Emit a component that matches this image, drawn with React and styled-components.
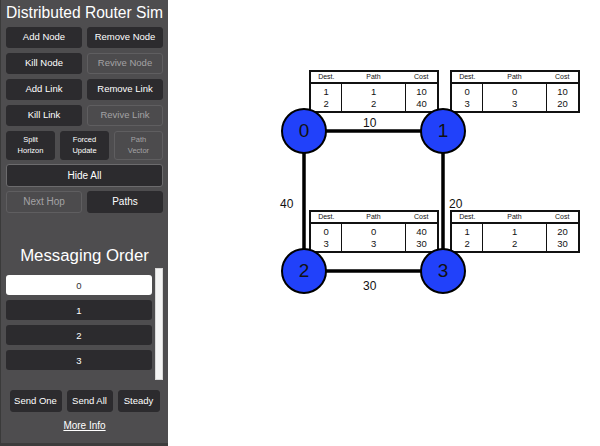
import React, { useState } from "react";
import styled, { createGlobalStyle } from "styled-components";

const GlobalStyle = createGlobalStyle`
  html, body {
    margin: 0;
    padding: 0;
    background: #fff;
    font-family: "Liberation Sans", Arial, sans-serif;
  }
`;

const Page = styled.div`
  display: flex;
  width: 600px;
  height: 446px;
  overflow: hidden;
`;

const Sidebar = styled.div`
  width: 168px;
  height: 446px;
  box-sizing: border-box;
  background: #4e4d4f;
  border-left: 1px solid #3a3a3a;
  border-bottom: 3px solid #3c3c3c;
  display: flex;
  flex-direction: column;
  padding: 0 5px 0 5px;
  color: #fff;
`;

const Title = styled.h1`
  margin: 3px 0 0 0;
  font-size: 15.6px;
  font-weight: 400;
  text-align: center;
  line-height: 20px;
  white-space: nowrap;
`;

const Grid = styled.div`
  display: grid;
  grid-template-columns: repeat(${(p) => p.cols}, 1fr);
  gap: 5px;
  margin-top: ${(p) => p.top || 5}px;
`;

const Button = styled.button`
  height: ${(p) => p.h || 21}px;
  border-radius: 3px;
  border: 1px solid ${(p) => (p.off ? "#5f5e60" : p.outlined ? "#6c6b6d" : "#2c2b2e")};
  background: ${(p) => (p.off ? "#4c4b4d" : "#2c2b2e")};
  color: ${(p) => (p.off ? "#a3a2a4" : "#fff")};
  font-family: "Liberation Sans", Arial, sans-serif;
  font-size: ${(p) => p.fs || 9.5}px;
  line-height: 1.35;
  padding: 0;
  cursor: pointer;
`;

const Spacer = styled.div`
  height: ${(p) => p.h}px;
`;

const SubTitle = styled.h2`
  margin: 0;
  font-size: 16.8px;
  font-weight: 400;
  text-align: center;
  line-height: 22px;
`;

const ListWrap = styled.div`
  display: flex;
  gap: 3px;
  margin-top: 1px;
  height: 112px;
`;

const List = styled.div`
  flex: 1;
  display: flex;
  flex-direction: column;
  gap: 5px;
  padding-top: 7px;
`;

const Item = styled.div`
  height: 20px;
  border-radius: 3px;
  background: ${(p) => (p.active ? "#fff" : "#2c2b2e")};
  color: ${(p) => (p.active ? "#333" : "#fff")};
  font-size: 9.5px;
  display: flex;
  align-items: center;
  justify-content: center;
`;

const Scrollbar = styled.div`
  width: 8px;
  background: #f4f4f4;
  border: 1px solid #d8d8d8;
  box-sizing: border-box;
`;

const BottomRow = styled.div`
  display: flex;
  justify-content: center;
  gap: 5px;
  margin-top: 10px;
`;

const SmallButton = styled(Button)`
  width: ${(p) => p.w}px;
  height: 22px;
  font-size: 9.5px;
`;

const MoreInfo = styled.a`
  display: block;
  text-align: center;
  color: #fff;
  font-size: 10px;
  text-decoration: underline;
  margin-top: 8px;
`;

const Canvas = styled.div`
  position: relative;
  flex: 1;
  height: 446px;
`;

const Edges = styled.svg`
  position: absolute;
  left: 0;
  top: 0;
`;

const Node = styled.div`
  position: absolute;
  width: 42px;
  height: 42px;
  border-radius: 50%;
  background: #2141fa;
  border: 2px solid #000;
  color: #111;
  font-size: 19px;
  display: flex;
  align-items: center;
  justify-content: center;
`;

const Weight = styled.div`
  position: absolute;
  font-size: 12px;
  color: #111;
`;

const Table = styled.table`
  position: absolute;
  width: 130px;
  border-collapse: collapse;
  border: 2px solid #111;
  background: #fff;
  font-size: 9.5px;
  color: #111;
  td, th {
    padding: 0;
    text-align: center;
    line-height: 12px;
  }
  th {
    font-weight: 400;
    font-size: 7px;
    line-height: 10px;
    border-bottom: 2px solid #111;
  }
  td + td {
    border-left: 1.5px solid #111;
  }
  tbody tr:first-child td {
    padding-top: 2px;
  }
  tbody tr:last-child td {
    padding-bottom: 1px;
  }
`;

const nodes = [
  { id: 0, x: 136, y: 131 },
  { id: 1, x: 275, y: 131 },
  { id: 2, x: 136, y: 271 },
  { id: 3, x: 275, y: 271 },
];

const links = [
  [0, 1],
  [0, 2],
  [1, 3],
  [2, 3],
];

const weights = [
  { t: "10", x: 195, y: 116 },
  { t: "40", x: 112, y: 197 },
  { t: "20", x: 281, y: 197 },
  { t: "30", x: 195, y: 279 },
];

const tables = [
  { x: 141, y: 70, rows: [["1", "1", "10"], ["2", "2", "40"]] },
  { x: 282, y: 70, rows: [["0", "0", "10"], ["3", "3", "20"]] },
  { x: 141, y: 210, rows: [["0", "0", "40"], ["3", "3", "30"]] },
  { x: 282, y: 210, rows: [["1", "1", "20"], ["2", "2", "30"]] },
];

function RouteTable({ x, y, rows }) {
  return (
    <Table style={{ left: x, top: y }}>
      <colgroup>
        <col style={{ width: 32 }} />
        <col style={{ width: 65 }} />
        <col style={{ width: 33 }} />
      </colgroup>
      <thead>
        <tr>
          <th>Dest.</th>
          <th>Path</th>
          <th>Cost</th>
        </tr>
      </thead>
      <tbody>
        {rows.map((r, i) => (
          <tr key={i}>
            {r.map((c, j) => (
              <td key={j}>{c}</td>
            ))}
          </tr>
        ))}
      </tbody>
    </Table>
  );
}

export default function App() {
  const [active, setActive] = useState(0);
  return (
    <Page>
      <GlobalStyle />
      <Sidebar>
        <Title>Distributed Router Sim</Title>
        <Grid cols={2} top={4}>
          <Button>Add Node</Button>
          <Button>Remove Node</Button>
          <Button>Kill Node</Button>
          <Button off>Revive Node</Button>
          <Button>Add Link</Button>
          <Button>Remove Link</Button>
          <Button>Kill Link</Button>
          <Button off>Revive Link</Button>
        </Grid>
        <Grid cols={3}>
          <Button h={29} fs={7.5}>
            Split
            <br />
            Horizon
          </Button>
          <Button h={29} fs={7.5}>
            Forced
            <br />
            Update
          </Button>
          <Button h={29} fs={7.5} off>
            Path
            <br />
            Vector
          </Button>
        </Grid>
        <Grid cols={1} top={4}>
          <Button h={23} outlined fs={10}>
            Hide All
          </Button>
        </Grid>
        <Grid cols={2} top={4}>
          <Button h={22} off fs={10}>
            Next Hop
          </Button>
          <Button h={22} fs={10}>
            Paths
          </Button>
        </Grid>
        <Spacer h={32} />
        <SubTitle>Messaging Order</SubTitle>
        <ListWrap>
          <List>
            {[0, 1, 2, 3].map((n) => (
              <Item key={n} active={n === active} onClick={() => setActive(n)}>
                {n}
              </Item>
            ))}
          </List>
          <Scrollbar />
        </ListWrap>
        <BottomRow>
          <SmallButton w={52}>Send One</SmallButton>
          <SmallButton w={46}>Send All</SmallButton>
          <SmallButton w={42}>Steady</SmallButton>
        </BottomRow>
        <MoreInfo href="#">More Info</MoreInfo>
      </Sidebar>
      <Canvas>
        <Edges width="432" height="446">
          {links.map(([a, b]) => (
            <line
              key={`${a}-${b}`}
              x1={nodes[a].x}
              y1={nodes[a].y}
              x2={nodes[b].x}
              y2={nodes[b].y}
              stroke="#000"
              strokeWidth="3.5"
            />
          ))}
        </Edges>
        {weights.map((w) => (
          <Weight key={w.t} style={{ left: w.x, top: w.y }}>
            {w.t}
          </Weight>
        ))}
        {tables.map((t, i) => (
          <RouteTable key={i} {...t} />
        ))}
        {nodes.map((n) => (
          <Node key={n.id} style={{ left: n.x - 23, top: n.y - 23 }}>
            {n.id}
          </Node>
        ))}
      </Canvas>
    </Page>
  );
}
